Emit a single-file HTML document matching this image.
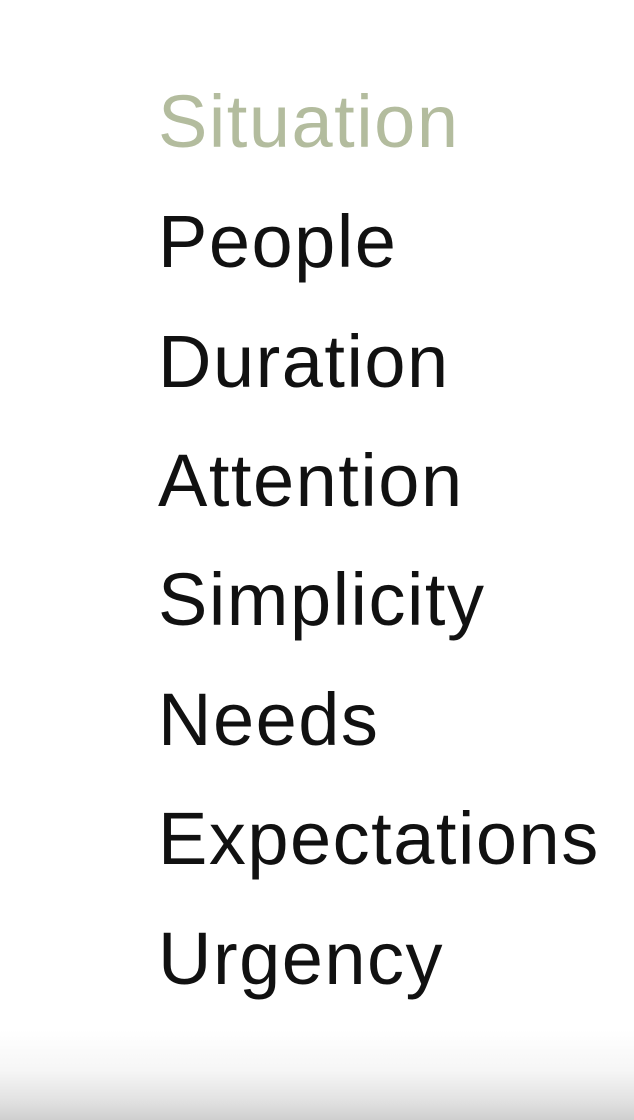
<!DOCTYPE html>
<html><head><meta charset="utf-8"><style>
html,body{margin:0;padding:0}
body{width:634px;height:1120px;position:relative;overflow:hidden;background:linear-gradient(to bottom,#fff 0,#fff 1030px,#f6f6f6 1070px,#e2e2e2 1100px,#cfcfcf 1120px);font-family:"Liberation Sans",sans-serif}
.w{position:absolute;left:158px;font-size:74px;line-height:1;letter-spacing:1.5px;color:#111;white-space:nowrap}
</style></head><body>
<div class="w" style="top:85px;color:#b3bc9e">Situation</div>
<div class="w" style="top:205px">People</div>
<div class="w" style="top:325px">Duration</div>
<div class="w" style="top:444px">Attention</div>
<div class="w" style="top:563px">Simplicity</div>
<div class="w" style="top:683px">Needs</div>
<div class="w" style="top:802px">Expectations</div>
<div class="w" style="top:922px">Urgency</div>
</body></html>
